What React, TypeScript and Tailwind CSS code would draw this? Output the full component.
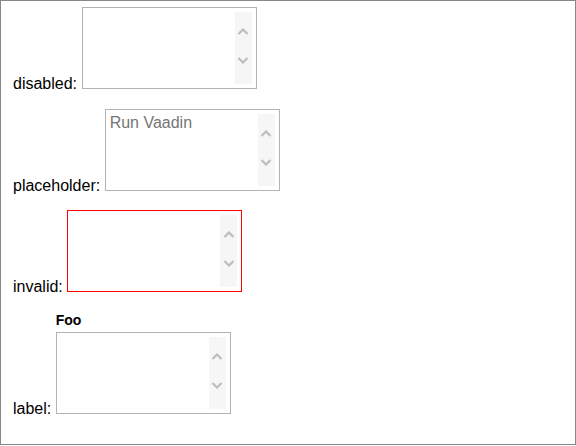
import type { ReactNode } from 'react';

function Chevron({ up }: { up?: boolean }) {
  return (
    <svg width="12" height="7" viewBox="0 0 12 7" className="block">
      <polyline
        points={up ? '1.5,6 6,1.5 10.5,6' : '1.5,1 6,5.5 10.5,1'}
        fill="none"
        stroke="#bdbdbd"
        strokeWidth="2.2"
      />
    </svg>
  );
}

// fake textarea: box + vertical scrollbar with arrows
function TextBox({ invalid, placeholder }: { invalid?: boolean; placeholder?: string }) {
  return (
    <div
      className={
        'inline-block align-baseline overflow-hidden w-[175px] h-[82px] border border-solid bg-white ' +
        (invalid ? 'border-[#ff0000]' : 'border-[#b3b3b3]')
      }
    >
      <div className="flex h-full p-[4px]">
        <div className="flex-1 text-[#757575] leading-[18px]">{placeholder}</div>
        <div className="w-[17px] h-[72px] bg-[#f6f6f6] flex flex-col items-center pt-[16px] gap-[22px]">
          <Chevron up />
          <Chevron />
        </div>
      </div>
    </div>
  );
}

function Row({ label, children, gap }: { label: string; children: ReactNode; gap: string }) {
  return (
    <div className={'leading-[18px] ' + gap}>
      {label}: {children}
    </div>
  );
}

export default function App() {
  return (
    <div
      className="w-[576px] h-[445px] border border-[#888888] bg-white text-black text-[16px] pl-[12px] pt-[6px]"
      style={{ fontFamily: '"Liberation Sans", Arial, sans-serif' }}
    >
      <Row label="disabled" gap="">
        <TextBox />
      </Row>
      <Row label="placeholder" gap="mt-[16px]">
        <TextBox placeholder="Run Vaadin" />
      </Row>
      <Row label="invalid" gap="mt-[15px]">
        <TextBox invalid />
      </Row>
      <Row label="label" gap="mt-[16px]">
        <div className="inline-block align-baseline">
          <div className="text-[14px] font-bold leading-[16px] mb-[4px]">Foo</div>
          <TextBox />
        </div>
      </Row>
    </div>
  );
}
